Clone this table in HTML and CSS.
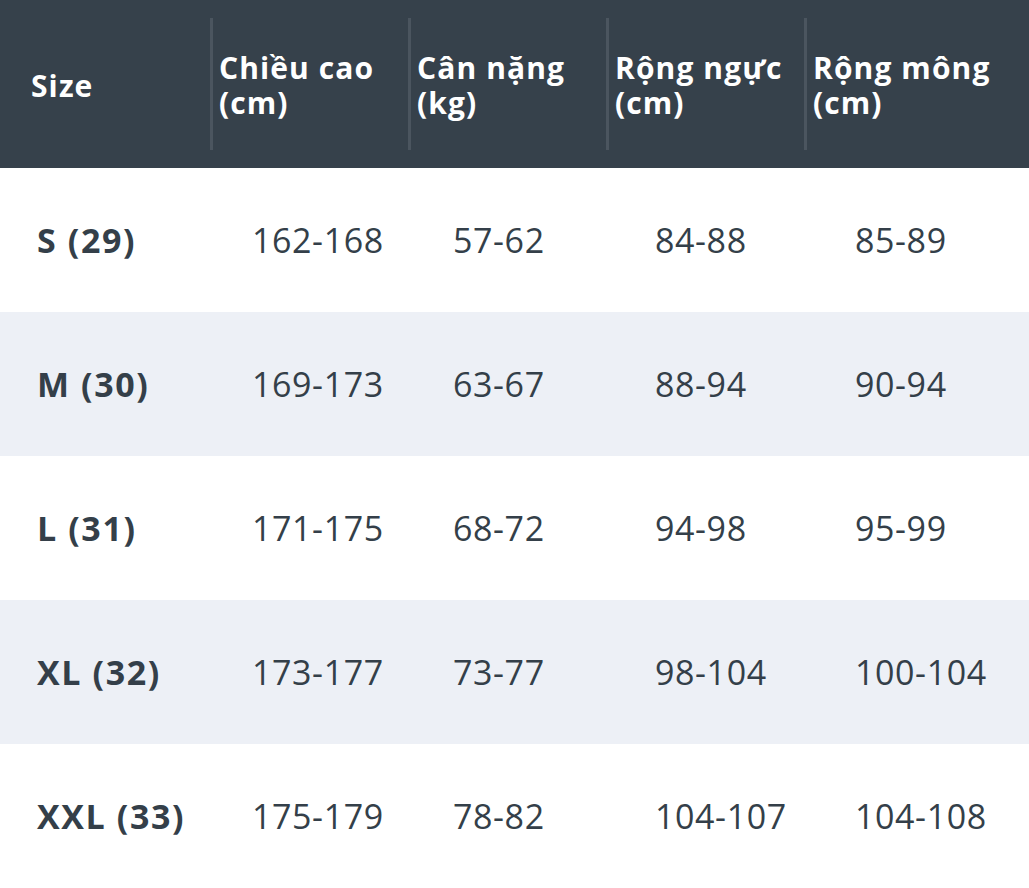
FILE: index.html
```html
<!DOCTYPE html>
<html lang="vi">
<head>
<meta charset="utf-8">
<title>Bảng size</title>
<link rel="stylesheet" href="styles.css">
</head>
<body>
<div class="size-table">
  <div class="head-row">
    <div class="hcell first">Size</div>
    <div class="hcell">Chiều cao<br>(cm)</div>
    <div class="hcell">Cân nặng<br>(kg)</div>
    <div class="hcell">Rộng ngực<br>(cm)</div>
    <div class="hcell">Rộng mông<br>(cm)</div>
  </div>
  <div class="row">
    <div class="cell size">S (29)</div>
    <div class="cell">162-168</div>
    <div class="cell">57-62</div>
    <div class="cell">84-88</div>
    <div class="cell">85-89</div>
  </div>
  <div class="row alt">
    <div class="cell size">M (30)</div>
    <div class="cell">169-173</div>
    <div class="cell">63-67</div>
    <div class="cell">88-94</div>
    <div class="cell">90-94</div>
  </div>
  <div class="row">
    <div class="cell size">L (31)</div>
    <div class="cell">171-175</div>
    <div class="cell">68-72</div>
    <div class="cell">94-98</div>
    <div class="cell">95-99</div>
  </div>
  <div class="row alt">
    <div class="cell size">XL (32)</div>
    <div class="cell">173-177</div>
    <div class="cell">73-77</div>
    <div class="cell">98-104</div>
    <div class="cell">100-104</div>
  </div>
  <div class="row">
    <div class="cell size">XXL (33)</div>
    <div class="cell">175-179</div>
    <div class="cell">78-82</div>
    <div class="cell">104-107</div>
    <div class="cell">104-108</div>
  </div>
</div>
</body>
</html>
```
FILE: styles.css
```css
html, body {
  margin: 0;
  padding: 0;
  background: #ffffff;
}
body {
  font-family: "Open Sans", "Liberation Sans", sans-serif;
  color: #343f49;
  overflow: hidden;
}
.size-table {
  width: 1029px;
}
.head-row {
  display: grid;
  grid-template-columns: 210px 198px 198px 198px 1fr;
  height: 168px;
  padding: 18px 0;
  box-sizing: border-box;
  background: #36414b;
  color: #ffffff;
}
.hcell {
  display: flex;
  align-items: center;
  font-weight: 700;
  font-size: 30px;
  line-height: 35px;
  letter-spacing: 1.1px;
  padding-left: 6px;
  border-left: 3px solid #4b555f;
  padding-top: 2px;
}
.hcell.first {
  border-left: none;
  padding-left: 31px;
}
.row {
  display: grid;
  grid-template-columns: 252px 201px 202px 200px 1fr;
  height: 144px;
  align-items: center;
  font-size: 34px;
  letter-spacing: 0.6px;
}
.row.alt {
  background: #edf0f6;
}
.cell.size {
  padding-left: 37px;
  font-weight: 700;
  letter-spacing: 1.6px;
}
```
